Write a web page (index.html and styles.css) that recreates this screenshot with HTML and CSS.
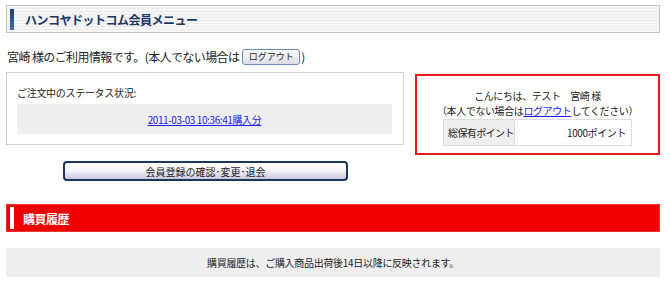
FILE: index.html
```html
<!DOCTYPE html>
<html lang="ja">
<head>
  <meta charset="UTF-8" />
  <title>会員メニュー</title>
  <link rel="stylesheet" href="styles.css">
</head>
<body>

<div class="page">
  <!-- Header -->
  <div class="menu-head">
    <span class="menu-bar"></span>
    <h1>ハンコヤドットコム会員メニュー</h1>
  </div>

  <p class="user-line">宮崎 様のご利用情報です。(本人でない場合は<button class="logout-btn">ログアウト</button>)</p>

  <div class="info-row">
    <div class="left-col">
      <div class="status-box">
        <p class="status-label">ご注文中のステータス状況:</p>
        <div class="status-inner">
          <a href="#">2011-03-03 10:36:41購入分</a>
        </div>
      </div>
      <button class="member-btn">会員登録の確認･変更･退会</button>
    </div>

    <div class="hello-box">
      <p>こんにちは、テスト　宮崎 様</p>
      <p>（本人でない場合は<a href="#">ログアウト</a>してください）</p>
      <table class="points">
        <tr>
          <th>総保有ポイント</th>
          <td>1000ポイント</td>
        </tr>
      </table>
    </div>
  </div>

  <div class="history-head">
    <span class="history-bar"></span>
    <h2>購買履歴</h2>
  </div>

  <div class="history-note">購買履歴は、ご購入商品出荷後14日以降に反映されます。</div>
</div>

</body>
</html>
```

FILE: styles.css
```css
* { margin: 0; padding: 0; box-sizing: border-box; }

html, body {
  background: #fff;
  font-family: "Noto Sans CJK JP", "DejaVu Sans", sans-serif;
  color: #222;
  font-size: 11px;
}

.page {
  width: 654px;
  margin: 5px 0 0 6px;
}

/* header */
.menu-head {
  display: flex;
  align-items: center;
  height: 28px;
  border: 1px solid #c2c2c2;
  background: repeating-linear-gradient(to bottom, #f6f6f6 0, #f6f6f6 2px, #ececec 2px, #ececec 3px);
  padding-left: 3px;
}

.menu-bar {
  width: 4px;
  height: 21px;
  background: linear-gradient(to bottom, #20406e, #3d6ca6);
}

.menu-head h1 {
  font-size: 12px;
  font-weight: bold;
  color: #1b3562;
  margin-left: 11px;
  letter-spacing: -0.5px;
}

.user-line {
  display: flex;
  align-items: center;
  font-size: 12px;
  margin: 15px 0 0 1px;
  height: 17px;
  letter-spacing: -0.6px;
}

.logout-btn {
  font-family: inherit;
  font-size: 9px;
  height: 16px;
  width: 58px;
  margin: 0 1px 0 3px;
  border: 1px solid #6b8bb8;
  border-radius: 3px;
  background: linear-gradient(to bottom, #ffffff, #dcdde8);
  color: #222;
  letter-spacing: 0;
}

/* info row */
.info-row {
  display: flex;
  align-items: flex-start;
  gap: 11px;
  margin-top: 6px;
}

.left-col {
  width: 398px;
  display: flex;
  flex-direction: column;
  align-items: flex-start;
}

.status-box {
  width: 398px;
  height: 73px;
  margin-top: 1px;
  border: 1px solid #d0d0d0;
  padding: 12px 11px 0 10px;
}

.status-label {
  font-size: 10px;
  height: 19px;
  letter-spacing: -0.3px;
}

.status-inner {
  background: #eeeeee;
  height: 30px;
  display: flex;
  align-items: center;
  justify-content: center;
}

.status-inner a {
  color: #1a1aee;
  font-size: 10px;
  letter-spacing: -0.4px;
}

.member-btn {
  font-family: inherit;
  width: 285px;
  height: 20px;
  margin: 16px 0 0 57px;
  border: 2px solid #1d3460;
  border-radius: 4px;
  background: linear-gradient(to bottom, #ffffff 0, #f4f4f8 45%, #c9c9de 100%);
  font-size: 10px;
  color: #222;
}

.hello-box {
  width: 245px;
  height: 81px;
  margin-top: 3px;
  border: 2px solid #f01a1a;
  padding-top: 12px;
  text-align: center;
  font-size: 10px;
  line-height: 15px;
  letter-spacing: -0.4px;
}

.hello-box a { color: #1a1aee; }

.points {
  margin: 1px auto 0;
  width: 189px;
  border-collapse: collapse;
  border: 1px solid #dcdcdc;
}

.points th, .points td {
  height: 26px;
  font-weight: normal;
  border: 1px solid #dcdcdc;
  white-space: nowrap;
}

.points th {
  width: 69px;
  background: #eeeeee;
  text-align: left;
  padding-left: 4px;
  letter-spacing: -0.6px;
}

.points td {
  text-align: right;
  padding-right: 5px;
}

/* history */
.history-head {
  display: flex;
  align-items: center;
  height: 28px;
  margin-top: 23px;
  background: #ee0000;
  border: 1px solid #e33;
  padding-left: 3px;
}

.history-bar {
  width: 4px;
  height: 22px;
  background: #fff;
}

.history-head h2 {
  color: #fff;
  font-size: 12px;
  font-weight: bold;
  margin-left: 9px;
  letter-spacing: -0.5px;
}

.history-note {
  margin-top: 16px;
  height: 29px;
  background: #eeeeee;
  display: flex;
  align-items: center;
  justify-content: center;
  font-size: 10px;
  letter-spacing: -0.3px;
}
```
